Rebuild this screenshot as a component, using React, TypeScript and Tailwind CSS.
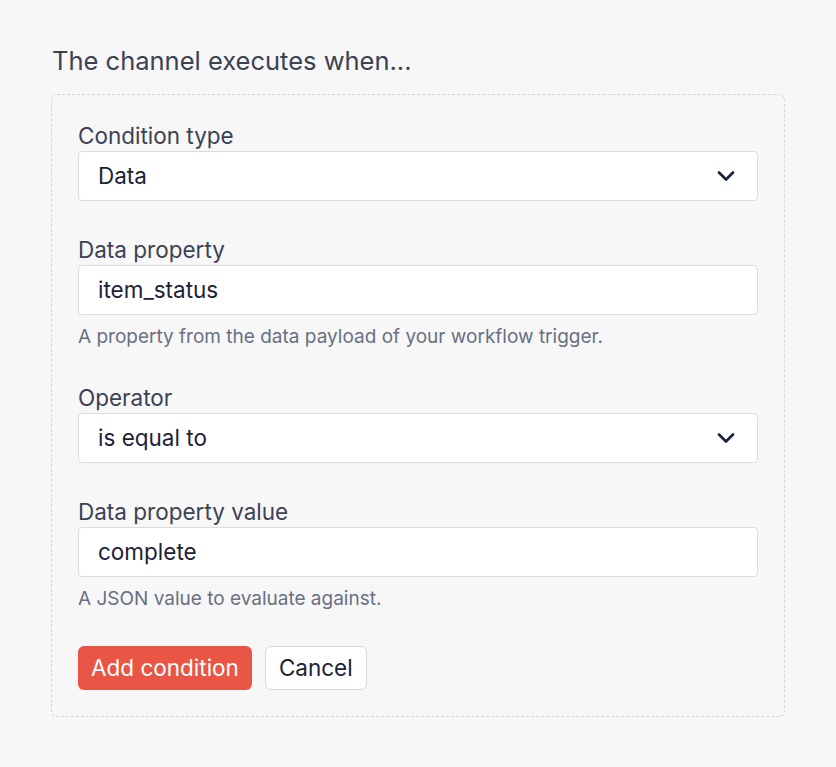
import React from "react";

function Chevron() {
  return (
    <svg width="20" height="20" viewBox="0 0 20 20" fill="none" className="shrink-0">
      <path d="M3 6.5L10 13.5L17 6.5" stroke="#1c2340" strokeWidth="2.7" strokeLinecap="round" strokeLinejoin="round" />
    </svg>
  );
}

function Label({ children }: { children: React.ReactNode }) {
  return <div className="text-[22.5px] leading-[28px] text-[#3b4254] mb-[1px]">{children}</div>;
}

function SelectBox({ value }: { value: string }) {
  return (
    <div className="h-[50px] bg-white border border-[#dcdcde] rounded-[4px] flex items-center justify-between pl-[19px] pr-[21px] text-[22.5px] text-[#1c2236]">
      <span>{value}</span>
      <Chevron />
    </div>
  );
}

function InputBox({ value }: { value: string }) {
  return (
    <div className="h-[50px] bg-white border border-[#dcdcde] rounded-[4px] flex items-center pl-[19px] text-[22.5px] text-[#1c2236]">
      {value}
    </div>
  );
}

function Help({ children }: { children: React.ReactNode }) {
  return <div className="mt-[10px] text-[19px] leading-[24px] text-[#697083]">{children}</div>;
}

export default function App() {
  return (
    <div
      className="min-h-[767px] w-full bg-[#f7f7f7] pt-[45px] px-[51px]"
      style={{ fontFamily: "Inter, 'Noto Sans', sans-serif" }}
    >
      <h1 className="text-[25.5px] leading-[32px] text-[#3b4254] pl-[1px] mb-[17px]">The channel executes when...</h1>
      <div className="w-[734px] border border-dashed border-[#d6d6d8] rounded-[6px] pt-[27px] pb-[26px] px-[26px] flex flex-col gap-[35px]">
        <div>
          <Label>Condition type</Label>
          <SelectBox value="Data" />
        </div>
        <div>
          <Label>Data property</Label>
          <InputBox value="item_status" />
          <Help>A property from the data payload of your workflow trigger.</Help>
        </div>
        <div>
          <Label>Operator</Label>
          <SelectBox value="is equal to" />
        </div>
        <div>
          <Label>Data property value</Label>
          <InputBox value="complete" />
          <Help>A JSON value to evaluate against.</Help>
        </div>
        <div className="flex gap-[13px]">
          <button className="h-[44px] px-[13px] rounded-[6px] bg-[#e95646] text-white text-[22.5px]">Add condition</button>
          <button className="h-[44px] px-[13px] rounded-[6px] bg-white border border-[#d8d8dc] text-[#1c2236] text-[22.5px]">Cancel</button>
        </div>
      </div>
    </div>
  );
}
